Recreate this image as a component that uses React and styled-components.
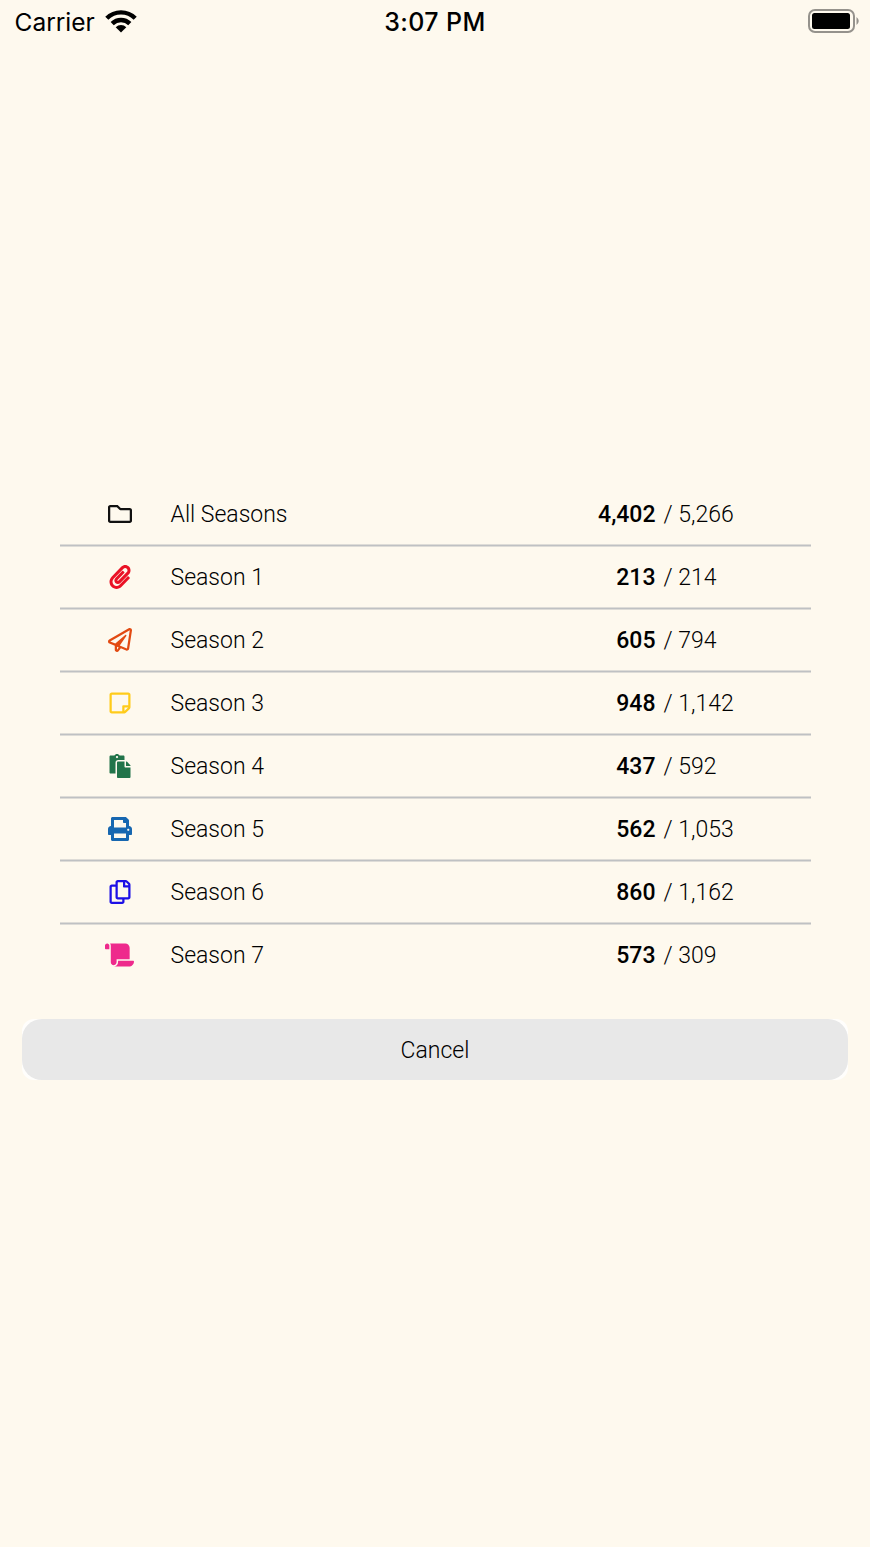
import React from 'react';
import styled, { createGlobalStyle } from 'styled-components';
import { FaRegFolder, FaPaperclip, FaRegPaperPlane, FaRegStickyNote, FaPaste, FaPrint, FaRegCopy, FaScroll } from 'react-icons/fa';

const Global = createGlobalStyle`
  *{box-sizing:border-box}
  body{margin:0;background:#fef9ee;color:#000}
`;
const Screen = styled.main`
  width:870px;height:1547px;display:flex;flex-direction:column;background:#fef9ee;
  font-family:Roboto,"Liberation Sans",sans-serif;overflow:hidden;
`;
const StatusBar = styled.header`
  height:44px;display:grid;grid-template-columns:1fr auto 1fr;align-items:center;padding:0 10.5px 0 14.5px;
  font-family:Inter,sans-serif;font-size:25px;
`;
const Carrier = styled.div`display:flex;align-items:center;gap:10px;font-size:24.5px;`;
const WifiIcon = styled.svg`display:block;width:32px;height:24px;margin-top:-2px;`;
const Clock = styled.div`font-weight:500;letter-spacing:.4px;margin-left:-4px;`;
const Battery = styled.svg`justify-self:end;display:block;width:52px;height:24px;margin-top:-2px;`;
const List = styled.ul`list-style:none;margin:439px 59.5px 0;padding:0;`;
const Row = styled.li`
  height:63px;display:grid;grid-template-columns:111px 1fr 120px 155px;align-items:center;
  padding-top:1px;border-bottom:1px solid #bfc1c3;font-size:23px;font-weight:300;
  box-shadow:0 1px 0 #dedcd7, inset 0 -1px 0 #dedcd7;
  &:last-child{border-bottom:0;padding-top:0;box-shadow:none}
`;
const IconCell = styled.span`
  display:flex;justify-content:center;padding-left:9px;margin-bottom:2px;color:${p => p.$color};
  svg{height:24px;width:${p => p.$wide ? 29 : 24}px}
`;
const Seen = styled.b`text-align:right;font-weight:500;`;
const Total = styled.span`padding-left:8px;`;
const CancelFrame = styled.div`
  margin:32px 22px 0;height:61px;border-radius:12px;background:#fffefc;display:flex;
`;
const Cancel = styled.button`
  flex:1;border:0;padding:2px 0 0;border-radius:20px;background:#e8e8e8;font:300 23px Roboto,sans-serif;color:#000;
`;
const rows = [
  ['All Seasons','4,402','5,266',FaRegFolder,'#111'],
  ['Season 1','213','214',FaPaperclip,'#ea1226'],
  ['Season 2','605','794',FaRegPaperPlane,'#e24a12'],
  ['Season 3','948','1,142',FaRegStickyNote,'#ffcb1a'],
  ['Season 4','437','592',FaPaste,'#22744a'],
  ['Season 5','562','1,053',FaPrint,'#1767b0'],
  ['Season 6','860','1,162',FaRegCopy,'#1d10e6'],
  ['Season 7','573','309',FaScroll,'#ee2a8c'],
];
export default function App(){
  return <Screen><Global/>
    <StatusBar>
      <Carrier>Carrier
        <WifiIcon viewBox="0 0 32 24" fill="none" stroke="#000" strokeWidth="4.4">
          <path d="M1.8 9.2a20.1 20.1 0 0 1 28.4 0"/>
          <path d="M7.2 14.6a12.4 12.4 0 0 1 17.6 0"/>
          <path d="M10.7 18.2a7.5 7.5 0 0 1 10.6 0L16 23.5Z" fill="#000" stroke="none"/>
        </WifiIcon>
      </Carrier>
      <Clock>3:07 PM</Clock>
      <Battery viewBox="0 0 52 24">
        <rect x="1" y="1" width="45" height="22" rx="6" fill="none" stroke="#95928c" strokeWidth="2"/>
        <rect x="4" y="4" width="38" height="16" rx="2.5"/>
        <path d="M48.5 8q4.5 4 0 8z" fill="#95928c"/>
      </Battery>
    </StatusBar>
    <List>{rows.map(([name,seen,total,Icon,color])=>
      <Row key={name}>
        <IconCell $color={color} $wide={Icon === FaScroll}><Icon/></IconCell>
        <span>{name}</span><Seen>{seen}</Seen><Total>/ {total}</Total>
      </Row>)}
    </List>
    <CancelFrame><Cancel>Cancel</Cancel></CancelFrame>
  </Screen>;
}
